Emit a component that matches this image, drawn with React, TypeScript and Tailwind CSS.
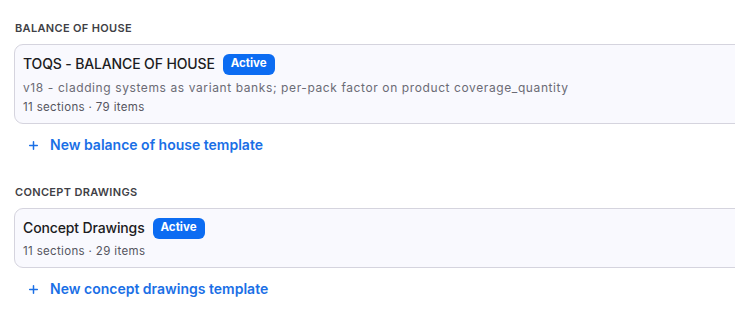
import React from 'react';
import { Plus } from 'lucide-react';

type Template = { name: string; description?: string; sections: number; items: number };

const groups: { heading: string; link: string; templates: Template[] }[] = [
  {
    heading: 'Balance of house',
    link: 'New balance of house template',
    templates: [
      {
        name: 'TOQS - BALANCE OF HOUSE',
        description: 'v18 - cladding systems as variant banks; per-pack factor on product coverage_quantity',
        sections: 11,
        items: 79,
      },
    ],
  },
  {
    heading: 'Concept drawings',
    link: 'New concept drawings template',
    templates: [{ name: 'Concept Drawings', sections: 11, items: 29 }],
  },
];

export default function App() {
  return (
    <div className="w-full h-[322px] overflow-hidden bg-white" style={{ fontFamily: 'Inter, "Noto Sans", sans-serif' }}>
      <div className="w-[780px] pl-[14px] pt-[21px] flex flex-col gap-[30px]">
        {groups.map((g) => (
          <section key={g.heading} className="flex flex-col">
            <h2 className="pl-px text-[11px] leading-[14px] font-semibold uppercase tracking-[0.03em] text-[#3f3f46]">
              {g.heading}
            </h2>
            <div className="mt-[9px] flex flex-col gap-2">
              {g.templates.map((t) => (
                <div key={t.name} className="rounded-[9px] border border-[#d5d4de] bg-[#f9f9fe] pl-2 pr-4 pt-[7px] pb-[8px]">
                  <div className="flex items-center gap-2">
                    <span className="text-[14px] leading-[24px] font-medium text-[#1c1c22] tracking-[-0.01em]">{t.name}</span>
                    <span className="rounded-[6px] bg-[#0c6cf2] px-2 h-[21px] flex items-center text-[11.5px] font-bold text-white">
                      Active
                    </span>
                  </div>
                  {t.description && (
                    <p className="mt-[4px] text-[12px] leading-[16px] tracking-[0.05em] text-[#6b6b75]">{t.description}</p>
                  )}
                  <p className="mt-[4px] text-[11.5px] leading-[15px] tracking-[0.03em] text-[#55555e]">
                    {t.sections} sections · {t.items} items
                  </p>
                </div>
              ))}
            </div>
            <button className="mt-[11px] ml-[13px] flex items-center gap-[10px] text-[14px] leading-[20px] font-semibold text-[#1a6fe6]">
              <Plus size={13} strokeWidth={2.75} />
              {g.link}
            </button>
          </section>
        ))}
      </div>
    </div>
  );
}
